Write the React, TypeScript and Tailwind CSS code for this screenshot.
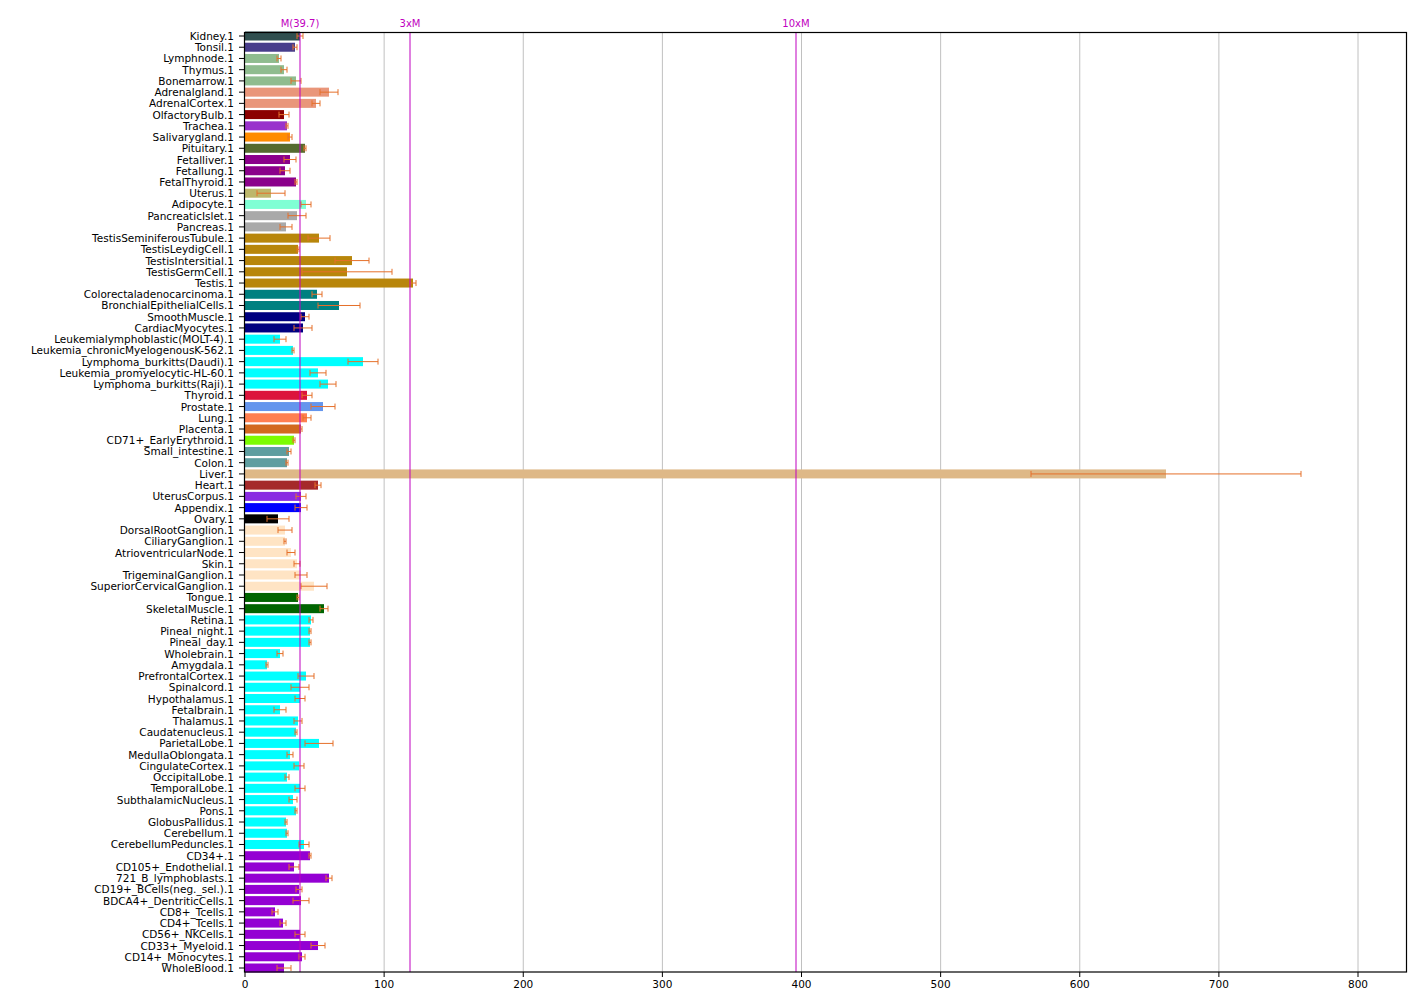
const rows: [string, number, number, string][] = [
["Kidney.1",300,303,"#2f4f4f"],["Tonsil.1",295,297,"#483d8b"],["Lymphnode.1",279,281,"#8fbc8f"],["Thymus.1",284,287,"#8fbc8f"],["Bonemarrow.1",296,301,"#8fbc8f"],
["Adrenalgland.1",329,338,"#e9967a"],["AdrenalCortex.1",316,320,"#e9967a"],["OlfactoryBulb.1",284,289,"#8b0000"],["Trachea.1",287,288,"#9932cc"],["Salivarygland.1",290,292,"#ff8c00"],
["Pituitary.1",305,306,"#556b2f"],["Fetalliver.1",290,296,"#8b008b"],["Fetallung.1",285,290,"#8b008b"],["FetalThyroid.1",296,297,"#8b008b"],["Uterus.1",271,285,"#bdb76b"],
["Adipocyte.1",306,311,"#7fffd4"],["PancreaticIslet.1",297,306,"#a9a9a9"],["Pancreas.1",286,292,"#a9a9a9"],["TestisSeminiferousTubule.1",319,330,"#b8860b"],["TestisLeydigCell.1",298,299,"#b8860b"],
["TestisIntersitial.1",352,369,"#b8860b"],["TestisGermCell.1",347,392,"#b8860b"],["Testis.1",413,416,"#b8860b"],["Colorectaladenocarcinoma.1",317,322,"#008080"],["BronchialEpithelialCells.1",339,360,"#008080"],
["SmoothMuscle.1",305,309,"#000080"],["CardiacMyocytes.1",303,312,"#000080"],["Leukemialymphoblastic(MOLT-4).1",280,286,"#00ffff"],["Leukemia_chronicMyelogenousK-562.1",293,294,"#00ffff"],["Lymphoma_burkitts(Daudi).1",363,378,"#00ffff"],
["Leukemia_promyelocytic-HL-60.1",318,326,"#00ffff"],["Lymphoma_burkitts(Raji).1",328,336,"#00ffff"],["Thyroid.1",307,312,"#dc143c"],["Prostate.1",323,335,"#6495ed"],["Lung.1",307,311,"#ff7f50"],
["Placenta.1",301,302,"#d2691e"],["CD71+_EarlyErythroid.1",294,295,"#7cfc00"],["Small_intestine.1",289,291,"#5f9ea0"],["Colon.1",287,288,"#5f9ea0"],["Liver.1",1166,1301,"#deb887"],
["Heart.1",318,321,"#a52a2a"],["UterusCorpus.1",301,306,"#8a2be2"],["Appendix.1",301,307,"#0000ff"],["Ovary.1",278,289,"#000000"],["DorsalRootGanglion.1",285,292,"#ffe4c4"],
["CiliaryGanglion.1",285,286,"#ffe4c4"],["AtrioventricularNode.1",291,295,"#ffe4c4"],["Skin.1",297,300,"#ffe4c4"],["TrigeminalGanglion.1",301,307,"#ffe4c4"],["SuperiorCervicalGanglion.1",314,327,"#ffe4c4"],
["Tongue.1",298,299,"#006400"],["SkeletalMuscle.1",324,328,"#006400"],["Retina.1",311,313,"#00ffff"],["Pineal_night.1",310,311,"#00ffff"],["Pineal_day.1",310,311,"#00ffff"],
["Wholebrain.1",280,283,"#00ffff"],["Amygdala.1",267,268,"#00ffff"],["PrefrontalCortex.1",306,314,"#00ffff"],["Spinalcord.1",300,309,"#00ffff"],["Hypothalamus.1",300,305,"#00ffff"],
["Fetalbrain.1",280,286,"#00ffff"],["Thalamus.1",298,302,"#00ffff"],["Caudatenucleus.1",296,297,"#00ffff"],["ParietalLobe.1",319,333,"#00ffff"],["MedullaOblongata.1",290,293,"#00ffff"],
["CingulateCortex.1",299,304,"#00ffff"],["OccipitalLobe.1",287,289,"#00ffff"],["TemporalLobe.1",300,305,"#00ffff"],["SubthalamicNucleus.1",293,297,"#00ffff"],["Pons.1",296,297,"#00ffff"],
["GlobusPallidus.1",286,287,"#00ffff"],["Cerebellum.1",287,288,"#00ffff"],["CerebellumPeduncles.1",304,309,"#00ffff"],["CD34+.1",310,311,"#9400d3"],["CD105+_Endothelial.1",294,299,"#9400d3"],
["721_B_lymphoblasts.1",329,332,"#9400d3"],["CD19+_BCells(neg._sel.).1",299,302,"#9400d3"],["BDCA4+_DentriticCells.1",301,309,"#9400d3"],["CD8+_Tcells.1",275,278,"#9400d3"],["CD4+_Tcells.1",283,286,"#9400d3"],
["CD56+_NKCells.1",300,305,"#9400d3"],["CD33+_Myeloid.1",318,325,"#9400d3"],["CD14+_Monocytes.1",302,305,"#9400d3"],["WholeBlood.1",284,291,"#9400d3"],
];
const X0 = 245, PX = 1113 / 800, Y0 = 36, DY = 932 / 83;
const F = "'DejaVu Sans', sans-serif";
export default function App() {
  const ticks = [0,100,200,300,400,500,600,700,800];
  return (
    <div className="w-[1426px] h-[1008px] bg-white">
      <svg width="1426" height="1008" fontFamily={F} fontSize="10.5">
        {ticks.slice(1).map(t => { const x = X0 + t * PX; return <line key={t} x1={x} x2={x} y1={32} y2={972} stroke="#c0c0c0" strokeWidth="1" />; })}
        {rows.map(([n, b, e, c], i) => {
          const y = Y0 + i * DY;
          return (
            <g key={n}>
              <rect x={X0} y={y - 4.5} width={b - X0} height={9} fill={c} />
              <line x1={2 * b - e} x2={e} y1={y} y2={y} stroke="#e5702a" strokeWidth="1" />
              <line x1={e} x2={e} y1={y - 3} y2={y + 3} stroke="#e5702a" strokeWidth="1" />
              <line x1={2 * b - e} x2={2 * b - e} y1={y - 3} y2={y + 3} stroke="#e5702a" strokeWidth="1" />
              <line x1={239} x2={244} y1={y} y2={y} stroke="#000" strokeWidth="1" />
              <text x={234} y={y + 4} textAnchor="end" fill="#000">{n}</text>
            </g>
          );
        })}
        {[[300,"M(39.7)"],[410,"3xM"],[796,"10xM"]].map(([x, l]) => (
          <g key={l as string}>
            <line x1={x as number} x2={x as number} y1={32} y2={972} stroke="#bf00bf" strokeWidth="1" />
            <text x={x as number} y={27} textAnchor="middle" fill="#bf00bf" fontSize="10">{l}</text>
          </g>
        ))}
        <rect x={244.5} y={32.5} width={1162} height={939.5} fill="none" stroke="#000" strokeWidth="1.2" />
        {ticks.map(t => { const x = X0 + t * PX; return (
          <g key={t}>
            <line x1={x} x2={x} y1={972} y2={977} stroke="#000" />
            <text x={x} y={988} textAnchor="middle" fill="#000">{t}</text>
          </g>); })}
      </svg>
    </div>
  );
}
